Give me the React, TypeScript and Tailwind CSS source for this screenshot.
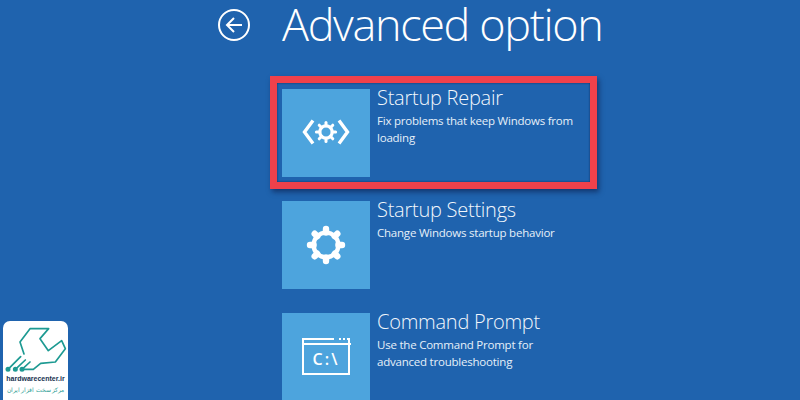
function Cog({ r, outer, width, stroke }: { r: number; outer: number; width: number; stroke: number }) {
  const angles = [0, 45, 90, 135, 180, 225, 270, 315]
  return (
    <g>
      <circle r={r} fill="none" stroke="white" strokeWidth={stroke} />
      {angles.map((a) => (
        <line
          key={a}
          x1="0"
          y1={-r}
          x2="0"
          y2={-outer}
          stroke="white"
          strokeWidth={width}
          strokeLinecap="round"
          transform={`rotate(${a})`}
        />
      ))}
    </g>
  )
}

function RepairIcon() {
  return (
    <svg width="50" height="26" viewBox="0 0 50 26" fill="none" className="-mt-[2px]">
      <path d="M12 1.5 L3.5 13 L12 24.5" stroke="white" strokeWidth="3.4" />
      <path d="M38 1.5 L46.5 13 L38 24.5" stroke="white" strokeWidth="3.4" />
      <g transform="translate(25 13)">
        <Cog r={6.2} outer={9.6} width={3} stroke={3.2} />
      </g>
    </svg>
  )
}

function Tile({ icon, title, lines }: { icon: React.ReactNode; title: string; lines: string[] }) {
  return (
    <div className="flex gap-[7px]">
      <div className="flex h-[88px] w-[88px] shrink-0 items-center justify-center bg-[#4da4dd]">{icon}</div>
      <div className="w-[215px]">
        <div className="-mt-[2px] text-[20px] leading-[22px] font-light tracking-[-0.25px] text-[#f2f7fc]">{title}</div>
        <div className="mt-[3px] text-[11.5px] leading-[17px] tracking-[-0.22px] text-[#e6f0f9]">
          {lines.map((l) => (
            <div key={l}>{l}</div>
          ))}
        </div>
      </div>
    </div>
  )
}

function WrenchLogo() {
  return (
    <svg width="62" height="48" viewBox="15 45 186 144" fill="none" stroke="#1d9a92" strokeWidth="5" strokeLinejoin="round" strokeLinecap="round">
      <path d="M72 132 L60 96 L90 56 L146 56 L120 86 L145 122 L185 92 L196 116 L166 156 L122 160 L100 178 L72 178" />
      <path d="M24 178 L62 140 M46 178 L76 150 M66 178 L90 156" />
      <circle cx="24" cy="178" r="5" fill="#1d9a92" />
      <circle cx="46" cy="178" r="5" fill="#1d9a92" />
      <circle cx="66" cy="178" r="5" fill="#1d9a92" />
    </svg>
  )
}

export default function App() {
  return (
    <div className="relative h-[400px] w-[800px] overflow-hidden bg-[#1f63ae] font-['Open_Sans',sans-serif]">
      <header className="flex h-[89px] items-start">
        <div className="ml-[218px] mt-[9px] flex h-[32px] w-[32px] items-center justify-center rounded-full border-[2px] border-white">
          <svg width="20" height="18" viewBox="0 0 20 18" fill="none" stroke="white" strokeWidth="2">
            <path d="M10 2 L3 9 L10 16" />
            <path d="M3 9 H18" />
          </svg>
        </div>
        <h1 className="ml-[32px] text-[45px] leading-[47px] font-light tracking-[-1.35px] whitespace-nowrap text-white">Advanced option</h1>
      </header>

      <div className="ml-[282px] flex flex-col gap-[24px]">
        <Tile icon={<RepairIcon />} title="Startup Repair" lines={['Fix problems that keep Windows from', 'loading']} />
        <Tile
          icon={
            <svg width="40" height="40" viewBox="-20 -20 40 40" className="-mt-[1px]">
              <Cog r={12.4} outer={16} width={6.4} stroke={4.4} />
            </svg>
          }
          title="Startup Settings"
          lines={['Change Windows startup behavior']}
        />
        <Tile
          icon={
            <div className="-mt-[1px] flex h-[37px] w-[48px] flex-col border-x-[2.5px] border-b-[2.5px] border-white">
              <div className="-mx-[2.5px] flex h-[5px] items-start justify-end gap-[2px] pr-[2px] pl-[2px]">
                <span className="mr-auto h-[2px] w-[30px] bg-white" />
                <span className="h-[2px] w-[2px] bg-white" />
                <span className="h-[2px] w-[2px] bg-white" />
                <span className="h-[2px] w-[2px] bg-white" />
              </div>
              <div className="-mx-[2.5px] flex flex-1 items-center justify-center border-t-[2.5px] border-white text-[16px] leading-none font-semibold tracking-[2px] text-white">
                C:\
              </div>
            </div>
          }
          title="Command Prompt"
          lines={['Use the Command Prompt for', 'advanced troubleshooting']}
        />
      </div>

      {/* red annotation round the first tile */}
      <div className="absolute top-[76px] left-[270px] h-[113px] w-[327px] border-[7px] border-[#f0414b] shadow-[2px_3px_5px_rgba(10,20,60,0.55),inset_0_0_2px_rgba(10,20,60,0.8)]" />

      {/* site badge */}
      <div className="absolute top-[321px] left-[3px] flex h-[79px] w-[65px] flex-col items-center rounded-t-[7px] bg-white pt-[4px]">
        <WrenchLogo />
        <div className="mt-[1px] font-['Liberation_Sans',sans-serif] text-[7px] leading-[10px] font-bold whitespace-nowrap text-[#17324f]">hardwarecenter.ir</div>
        <div className="mt-[2px] text-[5.5px] leading-[9px] whitespace-nowrap text-[#2a9d94]" dir="rtl">
          مرکز سخت افزار ایران
        </div>
      </div>
    </div>
  )
}
